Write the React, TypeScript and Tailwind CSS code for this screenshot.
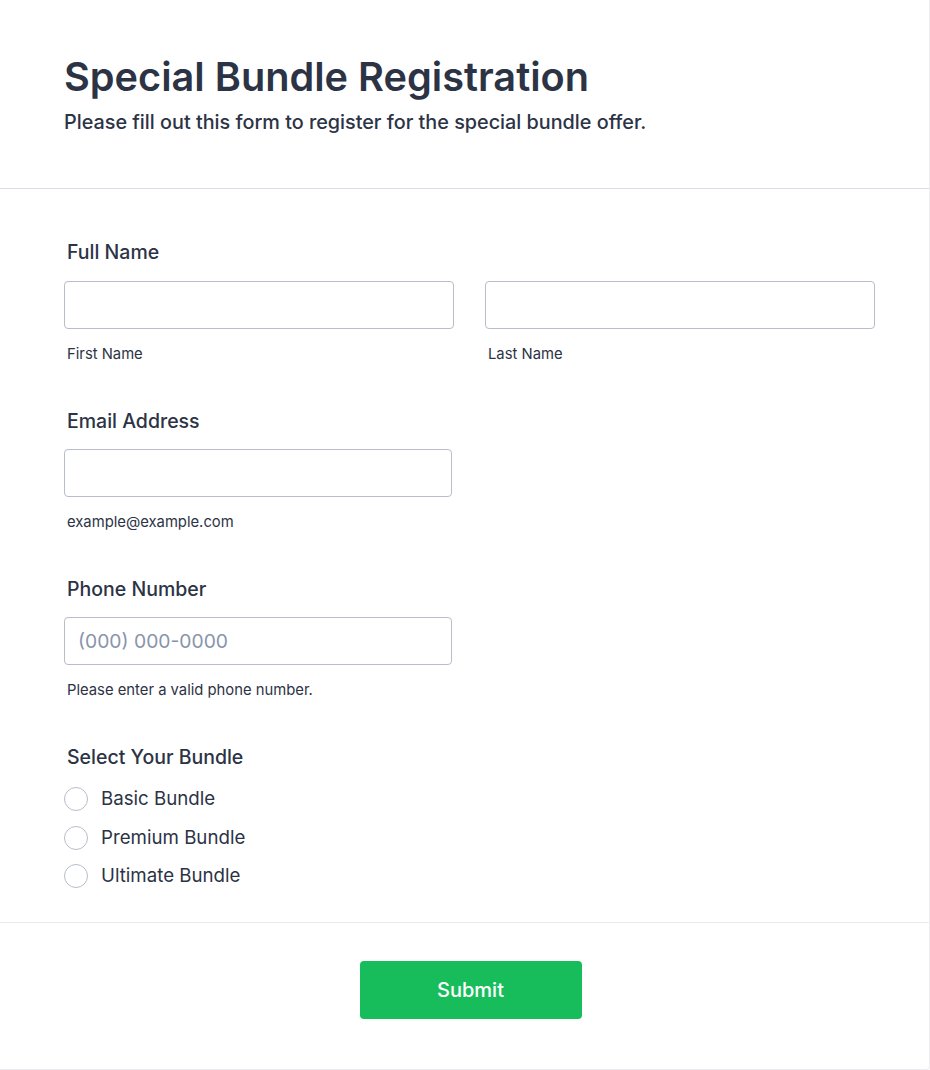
const fieldLabel = "block pl-[3px] text-[19.5px] leading-[28px] font-medium text-[#2c3345]";
const subLabel = "block pl-[3px] mt-[15px] text-[14.8px] leading-[20px] text-[#2c3345]";
const inputCls =
  "block w-full h-[48px] rounded-[4px] border border-[#b8bdc9] bg-white px-[13px] text-[19.3px] text-[#2c3345] placeholder:text-[#8894ab] outline-none";

const bundles = ["Basic Bundle", "Premium Bundle", "Ultimate Bundle"];

export default function App() {
  return (
    <div
      className="w-[930px] h-[1070px] bg-white border-r border-b border-[#ececf1] rounded-br-[4px] flex flex-col"
      style={{ fontFamily: "Inter, 'Noto Sans', sans-serif" }}
    >
      {/* header */}
      <div className="pt-[54px] pb-[52px] px-[64px] border-b border-[#dadbe6]">
        <h1 className="text-[39.7px] leading-[46px] font-semibold text-[#2c3345]">
          Special Bundle Registration
        </h1>
        <p className="mt-[8px] text-[19.8px] leading-[28px] font-medium text-[#2c3345]">
          Please fill out this form to register for the special bundle offer.
        </p>
      </div>

      {/* fields */}
      <div className="px-[64px] pt-[49px] pb-[26px] flex flex-col gap-[43px] border-b border-[#ebebf0]">
        <div>
          <label className={fieldLabel}>Full Name</label>
          <div className="mt-[15px] grid grid-cols-2 gap-[31px] w-[811px]">
            <div>
              <input className={inputCls} />
              <span className={subLabel}>First Name</span>
            </div>
            <div>
              <input className={inputCls} />
              <span className={subLabel}>Last Name</span>
            </div>
          </div>
        </div>

        <div className="w-[388px]">
          <label className={fieldLabel}>Email Address</label>
          <input className={inputCls + " mt-[14px]"} />
          <span className={subLabel}>example@example.com</span>
        </div>

        <div className="w-[388px]">
          <label className={fieldLabel}>Phone Number</label>
          <input className={inputCls + " mt-[14px]"} placeholder="(000) 000-0000" />
          <span className={subLabel}>Please enter a valid phone number.</span>
        </div>

        <div>
          <label className={fieldLabel}>Select Your Bundle</label>
          <div className="mt-[9px] flex flex-col">
            {bundles.map((b) => (
              <label key={b} className="flex items-center gap-[13px] h-[38.5px]">
                <span className="w-[24px] h-[24px] rounded-full border border-[#b8bdc9] bg-white" />
                <span className="text-[18.7px] leading-[28px] text-[#2c3345]">{b}</span>
              </label>
            ))}
          </div>
        </div>
      </div>

      {/* footer */}
      <div className="flex justify-center pt-[38px] pl-[12px]">
        <button className="w-[222px] h-[58px] rounded-[4px] bg-[#18bd5b] text-white text-[20px] font-medium">
          Submit
        </button>
      </div>
    </div>
  );
}
